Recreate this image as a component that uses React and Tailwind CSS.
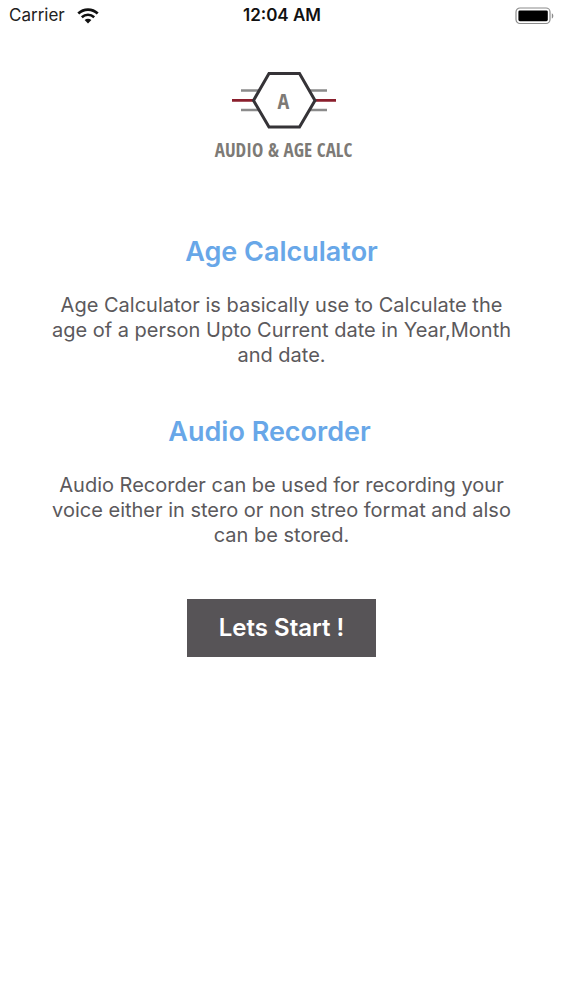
function WifiIcon() {
  return (
    <svg viewBox="0 0 22 16" className="h-4 w-[22px]" fill="none" aria-hidden="true">
      <path d="M1.3 5.6C6.8.4 15.2.4 20.7 5.6" stroke="#111" strokeWidth="2.8" />
      <path d="M4.8 9.2c3.6-3.2 8.800-3.2 12.4 0" stroke="#111" strokeWidth="2.6" />
      <path d="M7.6 12.1c2-1.700 4.8-1.7 6.8 0L11 15.4z" fill="#111" />
    </svg>
  );
}

function BatteryIcon() {
  return (
    <svg viewBox="0 0 40 18" className="h-[18px] w-10" fill="none" aria-hidden="true">
      <rect x="1" y="1" width="34" height="15.5" rx="4" stroke="#8c8c8c" strokeWidth="1.2" />
      <rect x="3.4" y="3.4" width="29.4" height="10.8" rx="1.4" fill="#000" />
      <path d="M36.8 6.2c2 .7 2 4.6 0 5.3z" fill="#8c8c8c" />
    </svg>
  );
}

function StatusBar() {
  return (
    <header className="grid h-8 grid-cols-3 items-center pr-2 pl-[9px] text-[17px] text-[#222]">
      <div className="flex items-center gap-3">
        <span>Carrier</span>
        <WifiIcon />
      </div>
      <span className="text-center font-semibold whitespace-nowrap text-[#111]">12:04 AM</span>
      <div className="flex justify-end">
        <BatteryIcon />
      </div>
    </header>
  );
}

function Logo() {
  return (
    <div className="mt-[38px] flex flex-col items-center pl-1 font-['Open_Sans_Condensed','Roboto_Condensed',sans-serif] font-bold text-[#7d7a76]">
      <div className="grid place-items-center">
        <svg viewBox="0 0 106 60" className="col-start-1 row-start-1 h-[60px] w-[106px]" fill="none" aria-hidden="true">
          <path d="M10 20.5h18M78 20.5h18M10 40h18M78 40h18" stroke="#8b8b8b" strokeWidth="2.4" />
          <path d="M1 30.4h21M84 30.4h21" stroke="#8a1f2d" strokeWidth="2.8" />
          <path d="M38 3.6h30.5L84 30.4 68.5 57H38L22.5 30.4z" fill="#fff" stroke="#353337" strokeWidth="3" />
        </svg>
        <span className="col-start-1 row-start-1 text-[22px]">A</span>
      </div>
      <p className="mt-1 text-[19px] leading-8 whitespace-nowrap">AUDIO &amp; AGE CALC</p>
    </div>
  );
}

function Feature({ title, titleClass, children }) {
  return (
    <section className="flex flex-col items-center gap-[23px]">
      <h2 className={`text-[27px] leading-9 font-semibold text-[#68a7e8] ${titleClass}`}>{title}</h2>
      <p className="max-w-[478px] text-center text-xl leading-[25px] text-[#5b595c]">{children}</p>
    </section>
  );
}

export default function App() {
  return (
    <div className="min-h-screen bg-white font-[Inter,sans-serif]">
      <StatusBar />
      <main className="flex flex-col items-center">
        <Logo />
        <div className="mt-[68px] flex flex-col gap-[46px]">
          <Feature title="Age Calculator" titleClass="">
            Age Calculator is basically use to Calculate the age of a person Upto Current date in Year,Month and date.
          </Feature>
          <Feature title="Audio Recorder" titleClass="pr-6">
            Audio Recorder can be used for recording your voice either in stero or non streo format and also can be stored.
          </Feature>
        </div>
        <button type="button" className="mt-[51px] bg-[#575457] px-8 py-3 text-2xl leading-[34px] font-semibold text-white">
          Lets Start !
        </button>
      </main>
    </div>
  );
}
